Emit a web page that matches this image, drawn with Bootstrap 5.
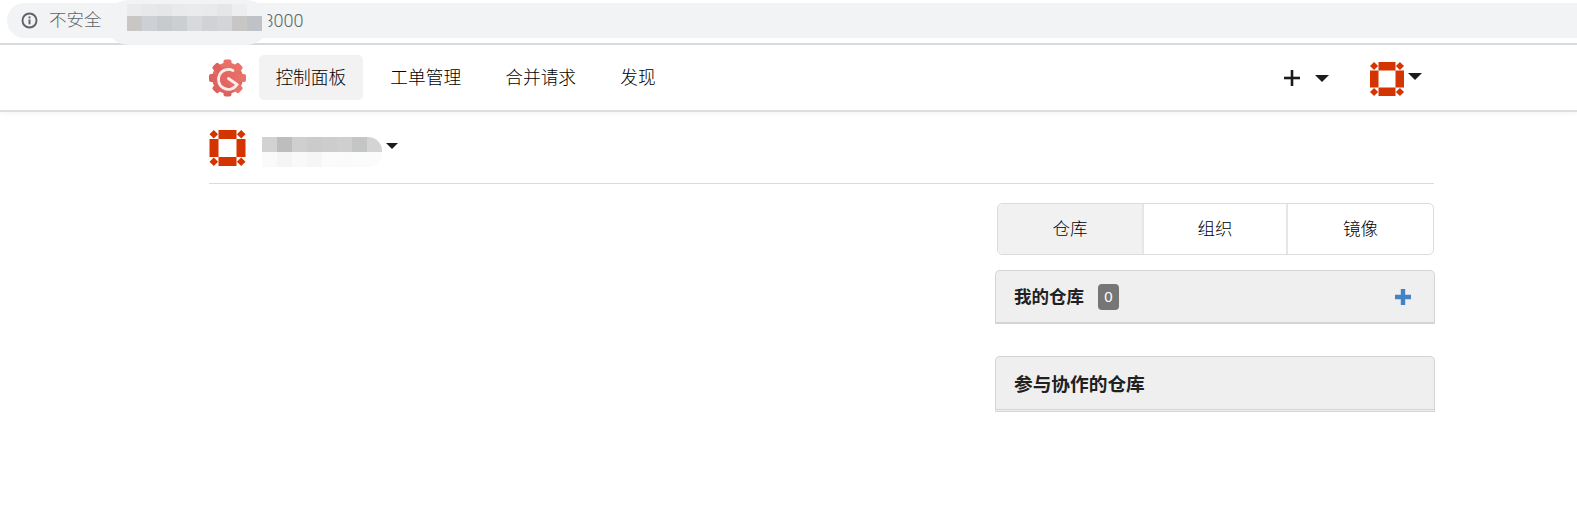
<!DOCTYPE html>
<html lang="zh">
<head>
<meta charset="utf-8">
<title>控制面板</title>
<link href="https://cdn.jsdelivr.net/npm/bootstrap@5.3.0/dist/css/bootstrap.min.css" rel="stylesheet">
<style>
html,body{height:531px;overflow:hidden}
body{background:#fff;color:#212121;font-family:"Liberation Sans","Noto Sans CJK SC",sans-serif;font-size:17.5px}
.chrome-bar{height:45px;background:#fff;border-bottom:2px solid #d9dadf;padding:3px 0 0 7px;position:relative}
.omni{height:35px;background:#f1f3f4;border-radius:18px 0 0 18px;color:#5f6368;font-size:17.5px;font-family:"Roboto","Noto Sans CJK SC",sans-serif;padding-left:14px;gap:7px}
.omni-label{margin-left:4px;font-weight:300}
.omni-port{margin-left:155px;font-size:18px;font-weight:300}
.smudge{position:absolute;left:106px;top:0;width:163px;height:45px;background:#f1f3f4;border-radius:24px}
.pix{position:absolute;display:grid}
.pix i{display:block}
.pix-url{left:127px;top:4px;grid-template-columns:repeat(9,15px);grid-template-rows:12px 15px}
.pix-name{left:262px;top:137px;grid-template-columns:repeat(8,15px);grid-auto-rows:15px;border-radius:0 14px 14px 0;overflow:hidden}
.topnav{height:67px;border-bottom:2px solid #dedede;box-shadow:0 2px 4px rgba(0,0,0,.04);padding:0}
.wrap{width:1225px;margin-left:209px;padding:0}
.brand-mark{width:37px;height:38px;margin-right:13px;flex:none}
.nav-entry{padding:0 16.4px;height:45px;line-height:43px;margin-right:11.4px;border-radius:5px;color:#000;text-decoration:none;font-family:"Noto Sans CJK SC",sans-serif;font-weight:300;font-size:17.7px}
.nav-entry.on{background:#f2f2f2}
.tri{display:inline-block;width:0;height:0;border-left:7px solid transparent;border-right:7px solid transparent;border-top:7px solid #1b1b1b}
.tri-sm{border-left-width:6px;border-right-width:6px;border-top-width:6px}
.right-tools{margin-right:12px}
.tool-caret{margin-left:15px;margin-right:41px;margin-top:2px}
.user-avatar{width:34px;height:34px;margin-top:2px}
.user-caret{margin-left:4px;margin-bottom:2px}
.ctx-row{height:72px;padding-top:18px;border-bottom:1px solid #dcdcdc;position:relative}
.ctx-avatar{width:37px;height:36px}
.ctx-caret{margin-left:140px;margin-top:-21px}
.side-col{width:440px;padding-top:19px;margin-right:-1px}
.tabset{margin-left:2px;margin-right:1px;height:52px;border:1px solid #dcdcdc;border-radius:5px;overflow:hidden}
.tabset a{line-height:47px;text-align:center;color:#000;text-decoration:none;border-right:2px solid #e6e6e6;font-family:"Noto Sans CJK SC",sans-serif;font-weight:300;font-size:17.5px;width:144px}
.tabset a:last-child{border-right:0;flex:1}
.tabset a.on{background:#f1f1f1;width:146px}
.repo-box{border:1px solid #d4d4d5;border-radius:5px 5px 0 0;background:#efefef;margin-top:15px;height:54px;padding:0 23px 0 18px;border-bottom:2px solid #d4d4d5;font-weight:700;font-family:"Noto Sans CJK SC",sans-serif;font-size:17.5px;color:#212121}
.repo-box.second{margin-top:32px;height:56px;border-bottom:3px double #d4d4d5;font-size:18.7px}
.count{background:#767676;color:#fff;width:21px;height:26px;border-radius:4px;margin-left:14px;font:400 15px "Liberation Sans",sans-serif}
</style>
</head>
<body>
<div class="chrome-bar">
  <div class="omni d-flex align-items-center">
    <svg width="17" height="17" viewBox="0 0 16 16"><circle cx="8" cy="8" r="6.6" fill="none" stroke="#5f6368" stroke-width="1.8"/><rect x="7.1" y="7" width="1.8" height="4.6" fill="#5f6368"/><rect x="7.1" y="4.2" width="1.8" height="1.8" fill="#5f6368"/></svg>
    <span class="omni-label">不安全</span>
    <span class="omni-port">3000</span>
  </div>
  <div class="smudge"></div>
  <div class="pix pix-url">
    <i style="background:#e9ebec"></i><i style="background:#e6e8ea"></i><i style="background:#e4e6e8"></i><i style="background:#e8eaeb"></i><i style="background:#e9ebec"></i><i style="background:#e8eaeb"></i><i style="background:#e4e6e8"></i><i style="background:#eceeef"></i><i style="background:#f1f3f4"></i>
    <i style="background:#c9c7c5"></i><i style="background:#cdd1d5"></i><i style="background:#c8cbce"></i><i style="background:#cbcfd2"></i><i style="background:#d7d9dc"></i><i style="background:#d0d2d5"></i><i style="background:#d3d5d8"></i><i style="background:#c9c7c5"></i><i style="background:#bfc3c7"></i>
  </div>
</div>

<nav class="navbar topnav">
  <div class="wrap d-flex align-items-center w-100" style="max-width:1225px">
    <svg class="brand-mark" viewBox="0 0 37 38">
      <defs><linearGradient id="gear" x1="0" y1="0" x2="0" y2="1"><stop offset="0" stop-color="#e9736a"/><stop offset="1" stop-color="#dc605c"/></linearGradient></defs>
      <g fill="url(#gear)">
        <circle cx="18.5" cy="19" r="15.5"/>
        <rect x="14.5" y="0.5" width="8" height="37" rx="2"/><rect x="14.5" y="0.5" width="8" height="37" rx="2" transform="rotate(45 18.5 19)"/><rect x="14.5" y="0.5" width="8" height="37" rx="2" transform="rotate(90 18.5 19)"/><rect x="14.5" y="0.5" width="8" height="37" rx="2" transform="rotate(135 18.5 19)"/>
      </g>
      <path d="M24 11.5A10 10 0 1 0 28 25.5L19.5 19.5" fill="none" stroke="#fdeceb" stroke-width="2.8" stroke-linecap="round"/>
    </svg>
    <a class="nav-entry on" href="#">控制面板</a>
    <a class="nav-entry" href="#">工单管理</a>
    <a class="nav-entry" href="#">合并请求</a>
    <a class="nav-entry" href="#">发现</a>
    <div class="ms-auto d-flex align-items-center right-tools">
      <svg width="16" height="16" viewBox="0 0 16 16"><rect x="6.7" y="0" width="2.6" height="16" fill="#1b1b1b"/><rect x="0" y="6.7" width="16" height="2.6" fill="#1b1b1b"/></svg>
      <span class="tri tool-caret"></span>
      <svg class="user-avatar" viewBox="0 0 36 36" fill="#d33400"><rect x="9" width="18" height="9"/><rect x="9" y="27" width="18" height="9"/><rect y="9" width="9" height="18"/><rect x="27" y="9" width="9" height="18"/><path d="M4.3 0l4.3 4.3-4.3 4.3L0 4.3zM31.7 0L36 4.3l-4.3 4.3-4.3-4.3zM4.3 27.4l4.3 4.3L4.3 36 0 31.7zM31.7 27.400l4.3 4.3-4.3 4.3-4.3-4.3z"/></svg>
      <span class="tri user-caret"></span>
    </div>
  </div>
</nav>

<main class="wrap">
  <div class="ctx-row d-flex">
    <svg class="ctx-avatar" viewBox="0 0 36 36" fill="#d33400"><rect x="9" width="18" height="9"/><rect x="9" y="27" width="18" height="9"/><rect y="9" width="9" height="18"/><rect x="27" y="9" width="9" height="18"/><path d="M4.3 0l4.3 4.3-4.3 4.3L0 4.3zM31.7 0L36 4.3l-4.3 4.3-4.3-4.3zM4.3 27.4l4.3 4.3L4.3 36 0 31.7zM31.7 27.400l4.3 4.3-4.3 4.3-4.3-4.3z"/></svg>
    <span class="tri tri-sm align-self-center ctx-caret"></span>
  </div>
  <div class="pix pix-name">
    <i style="background:#d2d2d2"></i><i style="background:#bebdbc"></i><i style="background:#cfcfcf"></i><i style="background:#c9cbcc"></i><i style="background:#cdcdcc"></i><i style="background:#d0cfcf"></i><i style="background:#c4c6c6"></i><i style="background:#d2d4d5"></i>
    <i style="background:#fafafa"></i><i style="background:#f5f5f5"></i><i style="background:#f9f9f9"></i><i style="background:#f6f6f6"></i><i style="background:#fbfbfb"></i><i style="background:#fafafa"></i><i style="background:#fbfbfb"></i><i style="background:#fbfbfb"></i>
  </div>
  <div class="d-flex justify-content-end">
    <section class="side-col">
      <div class="tabset d-flex">
        <a class="on" href="#">仓库</a>
        <a href="#">组织</a>
        <a href="#">镜像</a>
      </div>
      <div class="repo-box d-flex align-items-center">
        <span>我的仓库</span>
        <span class="count d-flex align-items-center justify-content-center">0</span>
        <svg class="ms-auto" width="16" height="16" viewBox="0 0 16 16"><path d="M5.8 0h4.4v5.8H16v4.4h-5.8V16H5.8v-5.8H0V5.8h5.8z" fill="#4183c4"/></svg>
      </div>
      <div class="repo-box second d-flex align-items-center">参与协作的仓库</div>
    </section>
  </div>
</main>
<script src="https://cdn.jsdelivr.net/npm/bootstrap@5.3.0/dist/js/bootstrap.bundle.min.js"></script>
</body>
</html>
